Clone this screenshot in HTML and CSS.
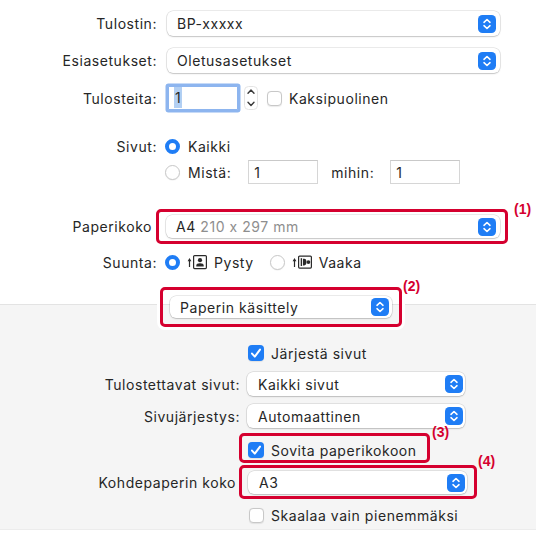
FILE: index.html
```html
<!DOCTYPE html>
<html lang="fi">
<head>
<meta charset="utf-8">
<title>Tulostus</title>
<link rel="stylesheet" href="styles.css">
</head>
<body>
<div class="sheet">
  <div class="row r1">
    <div class="lab">Tulostin:</div>
    <div class="popup pw-top"><span class="ptext">BP-xxxxx</span><svg class="pbtn" viewBox="0 0 18 18"><rect width="18" height="18" rx="4.5" fill="#1f7df5"/><path d="M6 7.3 9 4.5 12 7.3M6 10.7 9 13.5 12 10.7" fill="none" stroke="#fff" stroke-width="1.6" stroke-linecap="round" stroke-linejoin="round"/></svg></div>
  </div>
  <div class="row r2">
    <div class="lab">Esiasetukset:</div>
    <div class="popup pw-top"><span class="ptext">Oletusasetukset</span><svg class="pbtn" viewBox="0 0 18 18"><rect width="18" height="18" rx="4.5" fill="#1f7df5"/><path d="M6 7.3 9 4.5 12 7.3M6 10.7 9 13.5 12 10.7" fill="none" stroke="#fff" stroke-width="1.6" stroke-linecap="round" stroke-linejoin="round"/></svg></div>
  </div>
  <div class="row r3">
    <div class="lab">Tulosteita:</div>
    <div class="field focus"><span class="sel">1</span></div>
    <svg class="stepper" viewBox="0 0 14 24"><rect x=".5" y=".5" width="13" height="23" rx="4" fill="#fff" stroke="#e4e4e4"/><path d="M4 7.3 7 4 10 7.3M4 16.2 7 19.5 10 16.2" fill="none" stroke="#3a3a3a" stroke-width="1.4" stroke-linecap="round" stroke-linejoin="round"/></svg>
    <span class="cb"></span>
    <span class="cbtext">Kaksipuolinen</span>
  </div>
  <div class="row r4">
    <div class="lab">Sivut:</div>
    <span class="radio on"></span>
    <span class="rtext">Kaikki</span>
  </div>
  <div class="row r5">
    <div class="lab"></div>
    <span class="radio"></span>
    <span class="rtext">Mistä:</span>
    <div class="field f-from">1</div>
    <span class="mid">mihin:</span>
    <div class="field f-to">1</div>
  </div>
  <div class="row r6">
    <div class="lab lab-nc">Paperikoko</div>
    <div class="popup pw-size">
      <span class="ptext">A4 <span class="dim">210 x 297 mm</span></span><svg class="pbtn" viewBox="0 0 18 18"><rect width="18" height="18" rx="4.5" fill="#1f7df5"/><path d="M6 7.3 9 4.5 12 7.3M6 10.7 9 13.5 12 10.7" fill="none" stroke="#fff" stroke-width="1.6" stroke-linecap="round" stroke-linejoin="round"/></svg>
      <span class="mark m1"><span class="num n1">(1)</span></span>
    </div>
  </div>
  <div class="row r7">
    <div class="lab">Suunta:</div>
    <span class="radio on"></span>
    <svg class="orient" viewBox="0 0 21 16"><path d="M2.5 13V6" stroke="#2b2b2b" stroke-width="1.2"/><path d="M0.6 7.2 2.5 4 4.4 7.2Z" fill="#2b2b2b"/><rect x="6.6" y="1.6" width="12.8" height="13" rx="1" fill="none" stroke="#2b2b2b" stroke-width="1.2"/><circle cx="13" cy="6.2" r="2.1" fill="#2b2b2b"/><path d="M9.3 12.6V11.4Q9.3 9.2 13 9.2 16.7 9.2 16.7 11.4V12.6Z" fill="#2b2b2b"/></svg>
    <span class="otext">Pysty</span>
    <span class="radio r-land"></span>
    <svg class="orient" viewBox="0 0 21 16"><path d="M2.5 13V6" stroke="#2b2b2b" stroke-width="1.2"/><path d="M0.6 7.2 2.5 4 4.4 7.2Z" fill="#2b2b2b"/><rect x="6.6" y="2.1" width="12.8" height="12" rx="1" fill="none" stroke="#2b2b2b" stroke-width="1.2"/><path d="M9.4 4.2V12" stroke="#2b2b2b" stroke-width="1.4"/><path d="M11 4.8H12.2Q14.4 4.8 14.4 8.1 14.4 11.4 12.2 11.4H11Z" fill="#2b2b2b"/><circle cx="16.4" cy="8.1" r="1.9" fill="#2b2b2b"/></svg>
    <span class="otext">Vaaka</span>
  </div>

  <div class="panel">
    <div class="tabrow">
      <div class="popup pw-tab"><span class="ptext">Paperin käsittely</span><svg class="pbtn" viewBox="0 0 18 18"><rect width="18" height="18" rx="4.5" fill="#1f7df5"/><path d="M6 7.3 9 4.5 12 7.3M6 10.7 9 13.5 12 10.7" fill="none" stroke="#fff" stroke-width="1.6" stroke-linecap="round" stroke-linejoin="round"/></svg>
        <span class="mark m2"><span class="num n2">(2)</span></span>
      </div>
    </div>
    <div class="prow p1">
      <span class="cb on"><svg viewBox="0 0 16 16"><path d="M4 8.6 6.8 11.6 12 4.6" fill="none" stroke="#fff" stroke-width="2" stroke-linecap="round" stroke-linejoin="round"/></svg></span>
      <span class="cbtext">Järjestä sivut</span>
    </div>
    <div class="row p2">
      <div class="plab">Tulostettavat sivut:</div>
      <div class="popup pw-pan"><span class="ptext">Kaikki sivut</span><svg class="pbtn" viewBox="0 0 18 18"><rect width="18" height="18" rx="4.5" fill="#1f7df5"/><path d="M6 7.3 9 4.5 12 7.3M6 10.7 9 13.5 12 10.7" fill="none" stroke="#fff" stroke-width="1.6" stroke-linecap="round" stroke-linejoin="round"/></svg></div>
    </div>
    <div class="row p3">
      <div class="plab">Sivujärjestys:</div>
      <div class="popup pw-pan"><span class="ptext">Automaattinen</span><svg class="pbtn" viewBox="0 0 18 18"><rect width="18" height="18" rx="4.5" fill="#1f7df5"/><path d="M6 7.3 9 4.5 12 7.3M6 10.7 9 13.5 12 10.7" fill="none" stroke="#fff" stroke-width="1.6" stroke-linecap="round" stroke-linejoin="round"/></svg></div>
    </div>
    <div class="prow p4">
      <div class="cbgroup">
        <span class="cb on"><svg viewBox="0 0 16 16"><path d="M4 8.6 6.8 11.6 12 4.6" fill="none" stroke="#fff" stroke-width="2" stroke-linecap="round" stroke-linejoin="round"/></svg></span>
        <span class="cbtext">Sovita paperikokoon</span>
        <span class="mark m3"><span class="num n3">(3)</span></span>
      </div>
    </div>
    <div class="row p5">
      <div class="plab plab-nc">Kohdepaperin koko</div>
      <div class="popup pw-pan pw-a3"><span class="ptext">A3</span><svg class="pbtn" viewBox="0 0 18 18"><rect width="18" height="18" rx="4.5" fill="#1f7df5"/><path d="M6 7.3 9 4.5 12 7.3M6 10.7 9 13.5 12 10.7" fill="none" stroke="#fff" stroke-width="1.6" stroke-linecap="round" stroke-linejoin="round"/></svg>
        <span class="mark m4"><span class="num n4">(4)</span></span>
      </div>
    </div>
    <div class="prow p6">
      <span class="cb"></span>
      <span class="cbtext">Skaalaa vain pienemmäksi</span>
    </div>
  </div>
</div>
</body>
</html>
```

FILE: styles.css
```css
html, body {
  margin: 0;
  padding: 0;
  background: #ffffff;
}
body {
  width: 536px;
  height: 539px;
  overflow: hidden;
  font-family: Inter, "Noto Sans", "Liberation Sans", sans-serif;
  font-size: 14px;
  letter-spacing: 0.55px;
  color: #262626;
}
.sheet {
  padding-top: 11px;
}
.row {
  display: flex;
  align-items: center;
  gap: 8px;
}
.lab {
  flex: none;
  width: 157px;
  text-align: right;
  white-space: nowrap;
}
.lab-nc {
  box-sizing: border-box;
  padding-right: 5px;
}

/* popup buttons */
.popup {
  position: relative;
  box-sizing: border-box;
  height: 24px;
  display: flex;
  align-items: center;
  justify-content: space-between;
  padding: 0 3px 0 10px;
  background: #fff;
  border-radius: 6px;
  box-shadow: 0 0 0 0.5px rgba(0,0,0,0.16), 0 1px 1.5px rgba(0,0,0,0.16);
  white-space: nowrap;
}
.pbtn {
  width: 18px;
  height: 18px;
  flex: none;
}
.pw-top {
  width: 333px;
  height: 25px;
  margin-left: 2px;
  padding-right: 4px;
}
.r1 { height: 25px; }
.r2 { height: 25px; margin-top: 12px; }
.pw-size {
  width: 334px;
  height: 23px;
  margin-left: 1px;
  padding-right: 4px;
}
.dim { color: #8e8e8e; }

/* text fields */
.field {
  box-sizing: border-box;
  width: 70px;
  height: 24px;
  padding-left: 5px;
  line-height: 24px;
  background: #fff;
  border: 1px solid #d6d6d6;
  border-top-color: #c9c9c9;
}
.field.focus {
  margin-left: 3px;
  border-color: #8db5ef;
  box-shadow: 0 0 0 2.5px #8db5ef;
  border-radius: 1px;
  line-height: 22px;
}
.sel {
  background: #b2cff3;
  padding: 2px 1px;
}
.r3 { height: 30px; margin-top: 10px; }
.stepper {
  width: 14px;
  height: 24px;
  margin-left: -2px;
  flex: none;
}
.cb {
  box-sizing: border-box;
  display: inline-flex;
  flex: none;
  width: 15px;
  height: 15px;
  border-radius: 4px;
  background: #fff;
  border: 1px solid #c8c8c8;
  box-shadow: 0 0.5px 1px rgba(0,0,0,0.08);
}
.r3 .cb { margin-left: 1px; }
.cbtext { margin-left: -1px; }
.cb.on {
  width: 16px;
  height: 16px;
  border: none;
  background: #1f7df5;
}
.cb.on svg { width: 16px; height: 16px; }

/* radios */
.radio {
  box-sizing: border-box;
  flex: none;
  width: 15px;
  height: 15px;
  border-radius: 50%;
  background: #fff;
  border: 1px solid #c8c8c8;
  box-shadow: 0 0.5px 1px rgba(0,0,0,0.08);
}
.radio.on {
  border: 4.5px solid #1f7df5;
  box-shadow: none;
}
.r4 { height: 20px; margin-top: 23px; }
.r5 { height: 24px; margin-top: 4px; }
.f-from { margin-left: 9px; }
.mid { margin-left: 5px; margin-right: 8px; }
.r6 { height: 23px; margin-top: 31px; }
.r7 { height: 20px; margin-top: 14px; }
.orient {
  width: 21px;
  height: 16px;
  flex: none;
  margin-left: -1px;
}
.otext { margin-left: -2px; }
.r-land { margin-left: 8px; }

/* annotation marks */
.mark {
  position: absolute;
  border: 3px solid #d5002f;
  border-radius: 5px;
  pointer-events: none;
}
.num {
  position: absolute;
  font-family: "Liberation Sans", Arial, sans-serif;
  font-weight: bold;
  font-size: 14px;
  line-height: 14px;
  letter-spacing: 0;
  color: #d5002f;
}
.m1 { top: -6px; bottom: -6px; left: -10px; right: -8px; }
.n1 { left: calc(100% + 9px); top: -10px; }

/* panel */
.panel {
  margin-top: 32px;
  background: #f5f5f5;
  border-top: 1px solid #e3e3e3;
  border-bottom: 1px solid #ececec;
  height: 224px;
}
.tabrow {
  position: relative;
  z-index: 1;
  margin-top: -9px;
  height: 22px;
  padding-left: 170px;
}
.pw-tab {
  width: 222px;
  height: 22px;
}
.m2 {
  top: -9px; bottom: -9px; left: -10px; right: -10px;
  box-shadow: 0 0 0 3px #fff;
}
.n2 { left: calc(100% + 4px); top: -11px; }

.prow {
  display: flex;
  align-items: center;
  gap: 8px;
  padding-left: 248px;
  height: 20px;
}
.p1 { margin-top: 25px; }
.plab {
  flex: none;
  width: 240px;
  text-align: right;
  white-space: nowrap;
}
.plab-nc {
  box-sizing: border-box;
  padding-right: 4px;
}
.p2, .p3 { gap: 7px; }
.pw-pan {
  width: 218px;
  height: 24px;
  padding-left: 11px;
  padding-right: 2px;
}
.p2 { height: 24px; margin-top: 9px; }
.p3 { height: 24px; margin-top: 8px; }
.p4 { margin-top: 12px; }
.cbgroup {
  position: relative;
  display: flex;
  align-items: center;
  gap: 8px;
  height: 20px;
}
.m3 { top: -7px; bottom: -3px; left: -9px; width: 185px; }
.n3 { left: calc(100% + 5px); top: -11px; }
.p5 { height: 23px; margin-top: 11px; }
.pw-a3 { height: 23px; width: 219px; }
.m4 { top: -6px; bottom: -5px; left: -9px; right: -10px; }
.n4 { left: calc(100% + 4px); top: -14px; }
.p6 { margin-top: 11px; }
.p6 .cb { margin-left: 1px; }
```
